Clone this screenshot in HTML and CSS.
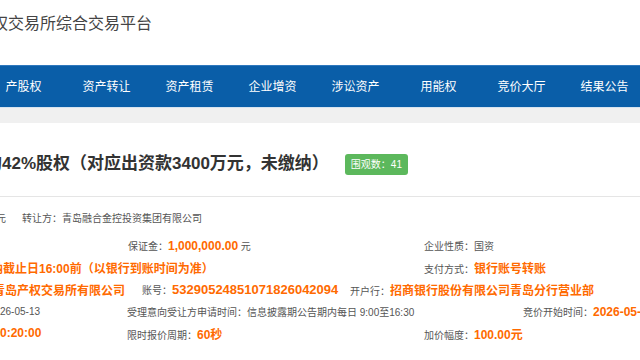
FILE: index.html
```html
<!DOCTYPE html>
<html lang="zh-CN">
<head>
  <meta charset="UTF-8">
  <meta name="viewport" content="width=device-width, initial-scale=1.0">
  <title>项目详情 - 产权交易所综合交易平台</title>
  <link rel="stylesheet" href="styles.css">
</head>
<body>
  <header class="top">
    <div class="site-name">权交易所综合交易平台</div>
  </header>

  <nav class="menu">
    <a href="#">产股权</a>
    <a href="#">资产转让</a>
    <a href="#">资产租赁</a>
    <a href="#">企业增资</a>
    <a href="#">涉讼资产</a>
    <a href="#">用能权</a>
    <a href="#">竞价大厅</a>
    <a href="#">结果公告</a>
  </nav>

  <div class="band"></div>

  <section class="project">
    <div class="project-head">
      <h1><span class="cut">的</span>42%股权（对应出资款3400万元，未缴纳）</h1>
      <span class="views">围观数：41</span>
    </div>

    <div class="info">
      <div class="row first">
        <span class="cell w22"><span class="cut-s">元</span></span>
        <span class="cell">转让方：青岛融合金控投资集团有限公司</span>
      </div>
      <div class="row">
        <span class="cell w128"></span>
        <span class="cell w296">保证金：<b class="hl">1,000,000.00</b> 元</span>
        <span class="cell">企业性质：国资</span>
      </div>
      <div class="row">
        <span class="cell w424"><b class="hl cut-m">纳截止日16:00前（以银行到账时间为准）</b></span>
        <span class="cell">支付方式：<b class="hl">银行账号转账</b></span>
      </div>
      <div class="row">
        <span class="cell w142"><b class="hl cut-l">青岛产权交易所有限公司</b></span>
        <span class="cell w208">账号：<b class="hl acct">53290524851071826042094</b></span>
        <span class="cell">开户行：<b class="hl">招商银行股份有限公司青岛分行营业部</b></span>
      </div>
      <div class="row">
        <span class="cell w127">26-05-13</span>
        <span class="cell w396">受理意向受让方申请时间：信息披露期公告期内每日 9:00至16:30</span>
        <span class="cell">竞价开始时间：<b class="hl">2026-05-20 10:00:00</b></span>
      </div>
      <div class="row">
        <span class="cell w127"><b class="hl">0:20:00</b></span>
        <span class="cell w297">限时报价周期：<b class="hl">60秒</b></span>
        <span class="cell">加价幅度：<b class="hl">100.00元</b></span>
      </div>
    </div>
  </section>
</body>
</html>
```

FILE: styles.css
```css
body {
  margin: 0;
  background: #fff;
  font-family: "Liberation Sans", "Noto Sans CJK SC", sans-serif;
  color: #555;
  overflow: hidden;
}
.top {
  height: 65px;
  padding-top: 12px;
  box-sizing: border-box;
}
.site-name {
  margin-left: -8px;
  font-size: 16px;
  line-height: 24px;
  color: #444;
  white-space: nowrap;
}
.menu {
  display: flex;
  height: 42px;
  margin-left: -18px;
  background: #0a5ea8;
  border-top: 1px solid #2f78bd;
  box-sizing: border-box;
  white-space: nowrap;
}
.menu a {
  flex: 0 0 83px;
  text-align: center;
  color: #fff;
  font-size: 12px;
  line-height: 42px;
  text-decoration: none;
}
.band {
  height: 15px;
  background: #f0f0f0;
  border-top: 1px solid #d6e3f0;
}
.project-head {
  display: flex;
  align-items: center;
  gap: 16px;
  padding: 26px 0 17px 0;
  border-bottom: 1px solid #e5e5e5;
  white-space: nowrap;
}
.project-head h1 {
  margin: 0;
  font-size: 17px;
  line-height: 30px;
  font-weight: bold;
  color: #333;
}
.cut {
  margin-left: -15px;
}
.views {
  display: inline-block;
  height: 21px;
  line-height: 21px;
  padding: 0 6px;
  font-size: 10px;
  color: #fff;
  background: #5cb85c;
  border-radius: 3px;
}
.info {
  padding-top: 9px;
  font-size: 10px;
}
.row {
  display: flex;
  align-items: center;
  height: 22px;
  white-space: nowrap;
}
.row.first {
  margin-bottom: 6px;
}
.cell {
  flex: 0 0 auto;
}
.w22 { width: 22px; }
.w127 { width: 127px; }
.w128 { width: 128px; }
.w142 { width: 142px; }
.w208 { width: 208px; }
.w296 { width: 296px; }
.w297 { width: 297px; }
.w396 { width: 396px; }
.w424 { width: 424px; }
.hl {
  color: #ff6a00;
  font-size: 12px;
  font-weight: bold;
}
.acct {
  font-size: 13px;
}
.cut-s {
  margin-left: -4px;
}
.cut-m {
  margin-left: -9px;
}
.cut-l {
  margin-left: -7px;
}
```
